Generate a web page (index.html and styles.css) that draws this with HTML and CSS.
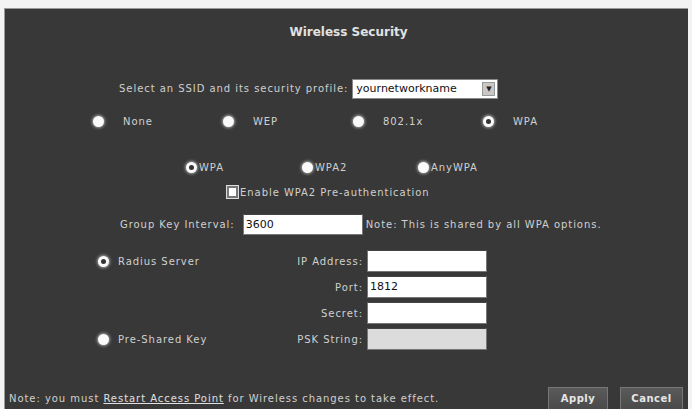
FILE: index.html
```html
<!DOCTYPE html>
<html lang="en">
<head>
  <meta charset="UTF-8" />
  <title>Wireless Security</title>
  <link rel="stylesheet" href="styles.css">
</head>
<body>
  <div class="panel">
    <h1 class="title">Wireless Security</h1>

    <!-- SSID -->
    <div class="ssid-row">
      <span>Select an SSID and its security profile:</span>
      <div class="select">
        <span class="select-text">yournetworkname</span>
        <span class="select-arrow">▼</span>
      </div>
    </div>

    <!-- MODES -->
    <div class="modes">
      <label class="opt"><span class="radio"></span><span>None</span></label>
      <label class="opt"><span class="radio"></span><span>WEP</span></label>
      <label class="opt"><span class="radio"></span><span>802.1x</span></label>
      <label class="opt"><span class="radio checked"></span><span>WPA</span></label>
    </div>

    <div class="wpa-types">
      <label class="opt tight"><span class="radio checked"></span><span>WPA</span></label>
      <label class="opt tight"><span class="radio"></span><span>WPA2</span></label>
      <label class="opt tight"><span class="radio"></span><span>AnyWPA</span></label>
    </div>

    <div class="preauth">
      <span class="checkbox"></span><span>Enable WPA2 Pre-authentication</span>
    </div>

    <div class="group-key">
      <span class="group-label">Group Key Interval:</span>
      <div class="input wide">3600</div>
      <span>Note: This is shared by all WPA options.</span>
    </div>

    <!-- AUTH -->
    <div class="auth">
      <label class="opt auth-opt"><span class="radio checked"></span><span>Radius Server</span></label>
      <span class="field-label">IP Address:</span>
      <div class="input"></div>

      <span></span>
      <span class="field-label">Port:</span>
      <div class="input">1812</div>

      <span></span>
      <span class="field-label">Secret:</span>
      <div class="input"></div>

      <label class="opt auth-opt"><span class="radio"></span><span>Pre-Shared Key</span></label>
      <span class="field-label">PSK String:</span>
      <div class="input disabled"></div>
    </div>

    <div class="footer">
      <p class="note">Note: you must <a href="#">Restart Access Point</a> for Wireless changes to take effect.</p>
      <div class="buttons">
        <button class="btn">Apply</button>
        <button class="btn">Cancel</button>
      </div>
    </div>
  </div>
</body>
</html>
```

FILE: styles.css
```css
* {
  margin: 0;
  padding: 0;
  box-sizing: border-box;
}

body {
  background: #f3f3f3;
  font-family: 'DejaVu Sans', sans-serif;
  font-size: 10px;
  letter-spacing: 0.95px;
  color: #d0d0d0;
  overflow: hidden;
}

.panel {
  margin: 8px 0 0 4px;
  width: 684px;
  height: 401px;
  background: #383838;
  border-left: 1px solid #9a9a9a;
  border-top: 1px solid #9a9a9a;
  position: relative;
}

.title {
  font-size: 12px;
  font-weight: bold;
  letter-spacing: 0;
  text-align: center;
  color: #e2e2e2;
  padding-top: 16px;
  height: 69px;
  margin-left: 4px;
}

.ssid-row {
  display: flex;
  align-items: center;
  gap: 4px;
  margin-left: 114px;
  height: 21px;
}

.select {
  display: flex;
  align-items: center;
  width: 146px;
  height: 20px;
  background: #fff;
  border: 1px solid #888;
  color: #111;
  font-size: 11px;
  letter-spacing: 0;
  padding-left: 3px;
}

.select-text {
  flex: 1;
}

.select-arrow {
  width: 13px;
  height: 14px;
  margin-right: 2px;
  background: #c8c8c8;
  border: 1px solid #999;
  font-size: 7px;
  color: #222;
  text-align: center;
  line-height: 12px;
}

.modes {
  display: grid;
  grid-template-columns: repeat(4, 130px);
  margin: 14px 0 0 88px;
  height: 16px;
}

.opt {
  display: flex;
  align-items: center;
  gap: 19px;
}

.opt.tight {
  gap: 2px;
}

.radio {
  width: 11px;
  height: 11px;
  border-radius: 50%;
  background: #fafafa;
  box-shadow: 0 0 3px 1px rgba(255, 255, 255, 0.55);
  position: relative;
}

.radio.checked::after {
  content: '';
  position: absolute;
  left: 3px;
  top: 3px;
  width: 5px;
  height: 5px;
  border-radius: 50%;
  background: #333;
}

.wpa-types {
  display: grid;
  grid-template-columns: repeat(3, 116px);
  margin: 31px 0 0 181px;
  height: 14px;
}

.preauth {
  display: flex;
  align-items: center;
  gap: 2px;
  margin: 11px 0 0 222px;
  height: 14px;
}

.checkbox {
  width: 11px;
  height: 12px;
  background: #fff;
  border: 2px solid #777;
  outline: 1px solid #ddd;
}

.group-key {
  display: flex;
  align-items: center;
  gap: 3px;
  margin: 15px 0 0 115px;
  height: 21px;
}

.group-label {
  margin-right: 5px;
}

.input {
  width: 120px;
  height: 22px;
  background: #fff;
  border: 1px solid #777;
  border-top-color: #444;
  color: #111;
  font-size: 11px;
  letter-spacing: 0;
  padding: 3px 2px;
}

.input.wide {
  width: 120px;
  height: 21px;
}

.input.disabled {
  background: #dcdcdc;
}

.auth {
  display: grid;
  grid-template-columns: 150px 119px 120px;
  grid-auto-rows: 22px;
  row-gap: 4px;
  align-items: center;
  margin: 15px 0 0 93px;
}

.auth-opt {
  gap: 9px;
}

.field-label {
  text-align: right;
  padding-right: 4px;
}

.footer {
  position: absolute;
  left: 0;
  right: 0;
  bottom: 0;
  display: flex;
  justify-content: space-between;
  align-items: flex-end;
  padding: 0 5px 0 4px;
}

.note {
  padding-bottom: 5px;
}

.note a {
  color: #e0e0e0;
}

.buttons {
  display: flex;
  gap: 12px;
}

.btn {
  width: 60px;
  height: 22px;
  background: linear-gradient(#5a5a5a, #4a4a4a);
  border: 1px solid #777;
  border-bottom: none;
  color: #e6e6e6;
  font-family: 'DejaVu Sans', sans-serif;
  font-size: 10px;
  font-weight: bold;
  letter-spacing: 0.5px;
}

.btn:last-child {
  width: 63px;
}
```
